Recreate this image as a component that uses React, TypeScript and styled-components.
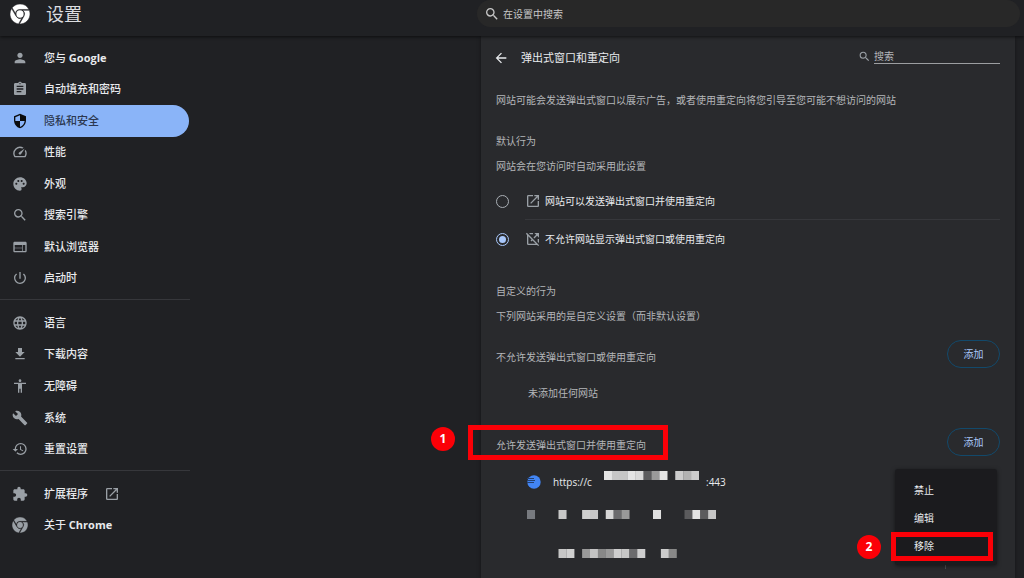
import React from "react";
import styled, { createGlobalStyle } from "styled-components";
import {
  MdPerson,
  MdAssignment,
  MdSecurity,
  MdSpeed,
  MdPalette,
  MdSearch,
  MdWeb,
  MdPowerSettingsNew,
  MdLanguage,
  MdAccessibility,
  MdBuild,
  MdExtension,
  MdArrowBack,
} from "react-icons/md";

const color = {
  page: "#202124",
  panel: "#292a2d",
  line: "#36373b",
  text: "#e8eaed",
  muted: "#b4b6b9",
  icon: "#9aa0a6",
  accent: "#8ab4f8",
  mark: "#fb0007",
};

const GlobalStyle = createGlobalStyle`
  * { box-sizing: border-box; }
  body {
    margin: 0;
    background: ${color.page};
    color: ${color.text};
    font-family: "Open Sans", "Noto Sans CJK SC", sans-serif;
    font-size: 10px;
    line-height: 20px;
  }
  h1, h2, h3, p, ul { margin: 0; padding: 0; font-weight: 400; }
  ul { list-style: none; }
  button, input { font: inherit; color: inherit; }
`;

const Page = styled.div`
  display: flex;
  flex-direction: column;
  min-height: 100vh;
  overflow: hidden;
  border-bottom: 1px solid #170c10;
`;

const Header = styled.header`
  position: relative;
  display: grid;
  grid-template-columns: 190px 287fr 543fr;
  padding: 0 4px 9px 0;
  background: ${color.page};
  box-shadow: 0 1px 3px rgba(0, 0, 0, 0.6);
`;

const Brand = styled.div`
  display: flex;
  align-items: center;
  gap: 16px;
  height: 27px;
  padding-left: 10px;
  color: #fff;
`;

const Title = styled.h1`
  padding-top: 1px;
  font-size: 18px;
  line-height: 24px;
  color: #dcdde0;
`;

const SearchBar = styled.label`
  grid-column: 3;
  display: flex;
  align-items: center;
  gap: 3px;
  height: 27px;
  padding: 0 8px 0 7px;
  border-radius: 14px;
  background: #282828;
  color: #c7c7c7;
`;

const TextField = styled.input`
  flex: 1;
  min-width: 0;
  padding: 0;
  border: 0;
  outline: 0;
  background: transparent;
  &::placeholder {
    color: inherit;
    opacity: 1;
  }
`;

const Body = styled.div`
  flex: 1;
  display: grid;
  grid-template-columns: 190px 291fr 534fr;
  padding-right: 9px;
`;

const Nav = styled.nav`
  padding-top: 6px;
`;

const NavList = styled.ul<{ $height: number }>`
  display: grid;
  grid-auto-rows: 1fr;
  min-height: ${(p) => p.$height}px;
  & + & {
    margin-top: 5px;
    padding-top: 7px;
    border-top: 1px solid ${color.line};
  }
`;

const NavLink = styled.a<{ $active?: boolean }>`
  display: flex;
  align-items: center;
  gap: 16px;
  height: 100%;
  margin-right: 1px;
  padding-left: 12px;
  border-radius: 0 16px 16px 0;
  font-size: 11px;
  font-weight: 500;
  text-decoration: none;
  color: ${(p) => (p.$active ? "#2c3850" : color.text)};
  background: ${(p) => (p.$active ? color.accent : "transparent")};
  & > svg {
    flex: none;
    color: ${(p) => (p.$active ? "#0b0c0e" : color.icon)};
  }
`;

const Latin = styled.span`
  font-weight: 700;
`;

const Panel = styled.main`
  grid-column: 3;
  padding: 0 15px;
  background: ${color.panel};
  box-shadow: 0 1px 4px rgba(0, 0, 0, 0.4);
`;

const PanelHeader = styled.div`
  display: flex;
  align-items: center;
  height: 43px;
`;

const BackButton = styled.button`
  display: flex;
  margin: 0 12px 0 -3px;
  padding: 0;
  border: 0;
  background: none;
`;

const PanelTitle = styled.h2`
  flex: 1;
  font-size: 11px;
`;

const PanelSearch = styled.label`
  display: flex;
  align-items: center;
  gap: 3px;
  margin-bottom: 2px;
  color: ${color.icon};
`;

const UnderlinedField = styled(TextField)`
  flex: none;
  width: 126px;
  height: 14px;
  line-height: 14px;
  border-bottom: 1px solid #9c9ea1;
  color: ${color.muted};
`;

const Description = styled.p`
  margin-top: 11px;
  color: ${color.muted};
`;

const SectionHead = styled.div<{ $top: number }>`
  display: grid;
  gap: 5px;
  margin-top: ${(p) => p.$top}px;
  color: ${color.muted};
`;

const SectionTitle = styled.h3`
  font-size: 10px;
`;

const Choices = styled.div`
  margin-top: 6px;
`;

const Choice = styled.label`
  display: flex;
  align-items: center;
  gap: 16px;
`;

const Radio = styled.input`
  appearance: none;
  flex: none;
  display: grid;
  place-items: center;
  width: 13px;
  height: 13px;
  margin: 0;
  border: 1px solid #a9afb5;
  border-radius: 50%;
  &:checked {
    border-color: #a8c7fa;
  }
  &:checked::before {
    content: "";
    width: 7px;
    height: 7px;
    border-radius: 50%;
    background: #a8c7fa;
  }
`;

const ChoiceBody = styled.span`
  flex: 1;
  display: flex;
  align-items: center;
  gap: 4px;
  height: 38px;
  border-bottom: 1px solid transparent;
  ${Choice}:not(:last-child) & {
    border-color: ${color.line};
  }
  & > svg {
    color: ${color.icon};
  }
`;

const ListHead = styled.div<{ $top: number }>`
  display: flex;
  align-items: center;
  justify-content: space-between;
  margin-top: ${(p) => p.$top}px;
  color: ${color.muted};
`;

const ListTitle = styled.h3`
  position: relative;
  padding-top: 6px;
  font-size: 10px;
`;

const AddButton = styled.button`
  width: 53px;
  height: 28px;
  padding: 0;
  border: 1px solid #12496b;
  border-radius: 14px;
  background: none;
  color: #a8c7fa;
`;

const Empty = styled.p`
  margin: 15px 0 0 32px;
  color: ${color.muted};
`;

const SiteList = styled.ul`
  position: relative;
  margin-top: 6px;
`;

const Site = styled.li`
  display: flex;
  align-items: center;
  height: 39px;
  padding-left: 31px;
`;

const SiteUrl = styled.span`
  width: 39px;
  margin: 0 12px;
`;

const SitePort = styled.span`
  margin-left: 7px;
`;

const Separator = styled.span`
  width: 1px;
  height: 18px;
  margin: 0 54px 0 auto;
  background: #4a4b4f;
`;

const MosaicArt = styled.svg`
  flex: none;
  height: 9px;
  margin-bottom: 12px;
`;

const Menu = styled.div`
  position: absolute;
  top: 7px;
  right: 3px;
  width: 102px;
  padding: 6px 0;
  border-radius: 3px;
  background: #1b1b1e;
  box-shadow: 0 1px 4px rgba(0, 0, 0, 0.5);
`;

const MenuItem = styled.button`
  position: relative;
  display: block;
  width: 100%;
  height: 28px;
  padding: 1px 19px 0;
  border: 0;
  background: none;
  text-align: left;
`;

const Highlight = styled.span`
  position: absolute;
  border: 5px solid ${color.mark};
  pointer-events: none;
`;

const TitleHighlight = styled(Highlight)`
  inset: -4px auto auto -28px;
  width: 200px;
  height: 35px;
`;

const ItemHighlight = styled(Highlight)`
  inset: 1px 4px auto -4px;
  height: 29px;
`;

const Step = styled.span`
  position: absolute;
  top: -3px;
  left: -42px;
  width: 24px;
  height: 24px;
  border-radius: 50%;
  background: ${color.mark};
  color: #fff;
  font-size: 12px;
  font-weight: 700;
  line-height: 24px;
  text-align: center;
`;

const ItemStep = styled(Step)`
  top: -2px;
  left: -39px;
`;

type IconProps = { size?: number; d: string };

const Glyph = ({ size = 16, d }: IconProps) => (
  <svg width={size} height={size} viewBox="0 0 24 24" fill="currentColor" aria-hidden="true">
    <path d={d} />
  </svg>
);

const CHROME =
  "M12 0C8.21 0 4.831 1.757 2.632 4.501l3.953 6.848A5.454 5.454 0 0 1 12 6.545h10.691A12 12 0 0 0 12 0zM1.931 5.47A11.943 11.943 0 0 0 0 12c0 6.012 4.42 10.991 10.189 11.864l3.953-6.847a5.45 5.45 0 0 1-6.865-2.29zm13.342 2.166a5.446 5.446 0 0 1 1.45 7.09l.002.001h-.002l-5.344 9.257c.206.01.413.016.621.016 6.627 0 12-5.373 12-12 0-1.54-.29-3.011-.818-4.364z";
const OPEN =
  "M19 19H5V5h7V3H5a2 2 0 0 0-2 2v14a2 2 0 0 0 2 2h14c1.1 0 2-.9 2-2v-7h-2v7zM14 3v2h3.59l-9.83 9.83 1.41 1.41L19 6.41V10h2V3h-7z";
const OPEN_OFF =
  "M16.79 5.8L14 3h7v7l-2.79-2.8-4.09 4.09-1.41-1.41L16.79 5.8zM19 12v4.17l2 2V12h-2zm.78 10.61L18.17 21H5a2 2 0 0 1-2-2V5.83L1.39 4.22 2.8 2.81l18.38 18.38-1.4 1.42zM16.17 19l-4.88-4.88L9.7 15.7l-1.41-1.41 1.58-1.58L5 7.83V19h11.17zM7.83 5H12V3H5.83l2 2z";
const DOWNLOAD = "M19 9h-4V3H9v6H5l7 7 7-7zM5 18v2h14v-2H5z";
const HISTORY =
  "M13 3a9 9 0 0 0-9 9H1l3.89 3.89.07.14L9 12H6c0-3.87 3.13-7 7-7s7 3.13 7 7-3.13 7-7 7c-1.93 0-3.68-.79-4.94-2.06l-1.42 1.42A8.95 8.95 0 0 0 13 21a9 9 0 0 0 0-18zm-1 5v5l4.28 2.54.72-1.21-3.5-2.08V8H12z";

const ChromeLogo = ({ size }: { size: number }) => (
  <svg width={size} height={size} viewBox="0 0 24 24" fill="currentColor" aria-hidden="true">
    <path d={CHROME} stroke={color.page} strokeWidth="0.6" />
    <circle cx="12" cy="12" r="4.4" />
  </svg>
);

const Favicon = () => (
  <svg width="14" height="14" viewBox="0 0 14 14" aria-hidden="true">
    <circle cx="7" cy="7" r="6.7" fill="#4285f4" />
    <path
      d="M0 3.5h7M0 5.5h8M0 7.5h7"
      stroke="#24406f"
      strokeWidth="1"
      shapeRendering="crispEdges"
    />
  </svg>
);

/* Each cell is [column, grey level]; columns are 63/8 px wide. */
type Cell = [number, string];

const Mosaic = ({ columns, cells }: { columns: number; cells: Cell[] }) => (
  <MosaicArt
    width={Math.round((columns * 63) / 8)}
    viewBox={`0 0 ${columns} 1`}
    preserveAspectRatio="none"
    aria-hidden="true"
  >
    {cells.map(([x, fill]) => (
      <rect key={x} x={x} width="1.02" height="1" fill={fill} />
    ))}
  </MosaicArt>
);

const hostCells: Cell[] = [
  [0, "#e4e4e4"], [1, "#c6c6c6"], [2, "#c6c6c6"], [3, "#e4e4e4"], [4, "#d9d9d9"], [5, "#5b5b5d"],
  [6, "#9a9a9a"], [7, "#e4e4e4"], [9, "#cccccc"], [10, "#b2b2b2"], [11, "#cccccc"],
];
const secondCells: Cell[] = [
  [0, "#777a7f"], [4, "#c8c8c8"], [7, "#d0d0d0"], [8, "#c6c6c6"], [10, "#d6d6d6"], [11, "#6b6b6d"],
  [12, "#999999"], [16, "#e0e0e0"], [20, "#5b5b5d"], [21, "#e4e4e4"], [22, "#5b5b5d"], [23, "#c6c6c6"],
];
const thirdCells: Cell[] = [
  [4, "#c6c6c6"], [5, "#d0d0d0"], [7, "#9a9a9a"], [8, "#c4c4c4"], [9, "#888888"], [10, "#9a9a9a"],
  [11, "#cecece"], [12, "#c6c6c6"], [13, "#6b6b6d"], [14, "#cecece"], [17, "#cccccc"], [18, "#888888"],
];

type NavEntry = { icon: React.ReactNode; label: React.ReactNode; active?: boolean; external?: boolean };

const navGroups: { height: number; items: NavEntry[] }[] = [
  {
    height: 252,
    items: [
      { icon: <MdPerson size={16} />, label: <>您与<Latin> Google</Latin></> },
      { icon: <MdAssignment size={16} />, label: "自动填充和密码" },
      { icon: <MdSecurity size={16} />, label: "隐私和安全", active: true },
      { icon: <MdSpeed size={16} />, label: "性能" },
      { icon: <MdPalette size={16} />, label: "外观" },
      { icon: <MdSearch size={16} />, label: "搜索引擎" },
      { icon: <MdWeb size={16} />, label: "默认浏览器" },
      { icon: <MdPowerSettingsNew size={16} />, label: "启动时" },
    ],
  },
  {
    height: 166,
    items: [
      { icon: <MdLanguage size={16} />, label: "语言" },
      { icon: <Glyph d={DOWNLOAD} />, label: "下载内容" },
      { icon: <MdAccessibility size={16} />, label: "无障碍" },
      { icon: <MdBuild size={16} />, label: "系统" },
      { icon: <Glyph d={HISTORY} />, label: "重置设置" },
    ],
  },
  {
    height: 71,
    items: [
      { icon: <MdExtension size={16} />, label: "扩展程序", external: true },
      { icon: <ChromeLogo size={16} />, label: <>关于<Latin> Chrome</Latin></> },
    ],
  },
];

export default function App() {
  return (
    <Page>
      <GlobalStyle />
      <Header>
        <Brand>
          <ChromeLogo size={20} />
          <Title>设置</Title>
        </Brand>
        <SearchBar>
          <MdSearch size={16} />
          <TextField type="text" placeholder="在设置中搜索" aria-label="在设置中搜索" />
        </SearchBar>
      </Header>

      <Body>
        <Nav>
          {navGroups.map((group, g) => (
            <NavList key={g} $height={group.height}>
              {group.items.map((item, i) => (
                <li key={i}>
                  <NavLink href="#" $active={item.active}>
                    {item.icon}
                    <span>{item.label}</span>
                    {item.external && <Glyph d={OPEN} />}
                  </NavLink>
                </li>
              ))}
            </NavList>
          ))}
        </Nav>

        <Panel>
          <PanelHeader>
            <BackButton type="button" aria-label="返回">
              <MdArrowBack size={16} />
            </BackButton>
            <PanelTitle>弹出式窗口和重定向</PanelTitle>
            <PanelSearch>
              <MdSearch size={13} />
              <UnderlinedField type="text" placeholder="搜索" aria-label="搜索" />
            </PanelSearch>
          </PanelHeader>

          <Description>
            网站可能会发送弹出式窗口以展示广告，或者使用重定向将您引导至您可能不想访问的网站
          </Description>

          <SectionHead $top={21}>
            <SectionTitle>默认行为</SectionTitle>
            <p>网站会在您访问时自动采用此设置</p>
          </SectionHead>
          <Choices>
            <Choice>
              <Radio type="radio" name="popups" />
              <ChoiceBody>
                <Glyph d={OPEN} />
                网站可以发送弹出式窗口并使用重定向
              </ChoiceBody>
            </Choice>
            <Choice>
              <Radio type="radio" name="popups" defaultChecked />
              <ChoiceBody>
                <Glyph d={OPEN_OFF} />
                不允许网站显示弹出式窗口或使用重定向
              </ChoiceBody>
            </Choice>
          </Choices>

          <SectionHead $top={23}>
            <SectionTitle>自定义的行为</SectionTitle>
            <p>下列网站采用的是自定义设置（而非默认设置）</p>
          </SectionHead>

          <ListHead $top={14}>
            <ListTitle>不允许发送弹出式窗口或使用重定向</ListTitle>
            <AddButton type="button">添加</AddButton>
          </ListHead>
          <Empty>未添加任何网站</Empty>

          <ListHead $top={25}>
            <ListTitle>
              允许发送弹出式窗口并使用重定向
              <TitleHighlight>
                <Step>1</Step>
              </TitleHighlight>
            </ListTitle>
            <AddButton type="button">添加</AddButton>
          </ListHead>

          <SiteList>
            <Site>
              <Favicon />
              <SiteUrl>https://c</SiteUrl>
              <Mosaic columns={12} cells={hostCells} />
              <SitePort>:443</SitePort>
            </Site>
            <Site>
              <Mosaic columns={24} cells={secondCells} />
            </Site>
            <Site>
              <Mosaic columns={24} cells={thirdCells} />
              <Separator />
            </Site>
            <Menu>
              <MenuItem type="button">禁止</MenuItem>
              <MenuItem type="button">编辑</MenuItem>
              <MenuItem type="button">
                移除
                <ItemHighlight>
                  <ItemStep>2</ItemStep>
                </ItemHighlight>
              </MenuItem>
            </Menu>
          </SiteList>
        </Panel>
      </Body>
    </Page>
  );
}
